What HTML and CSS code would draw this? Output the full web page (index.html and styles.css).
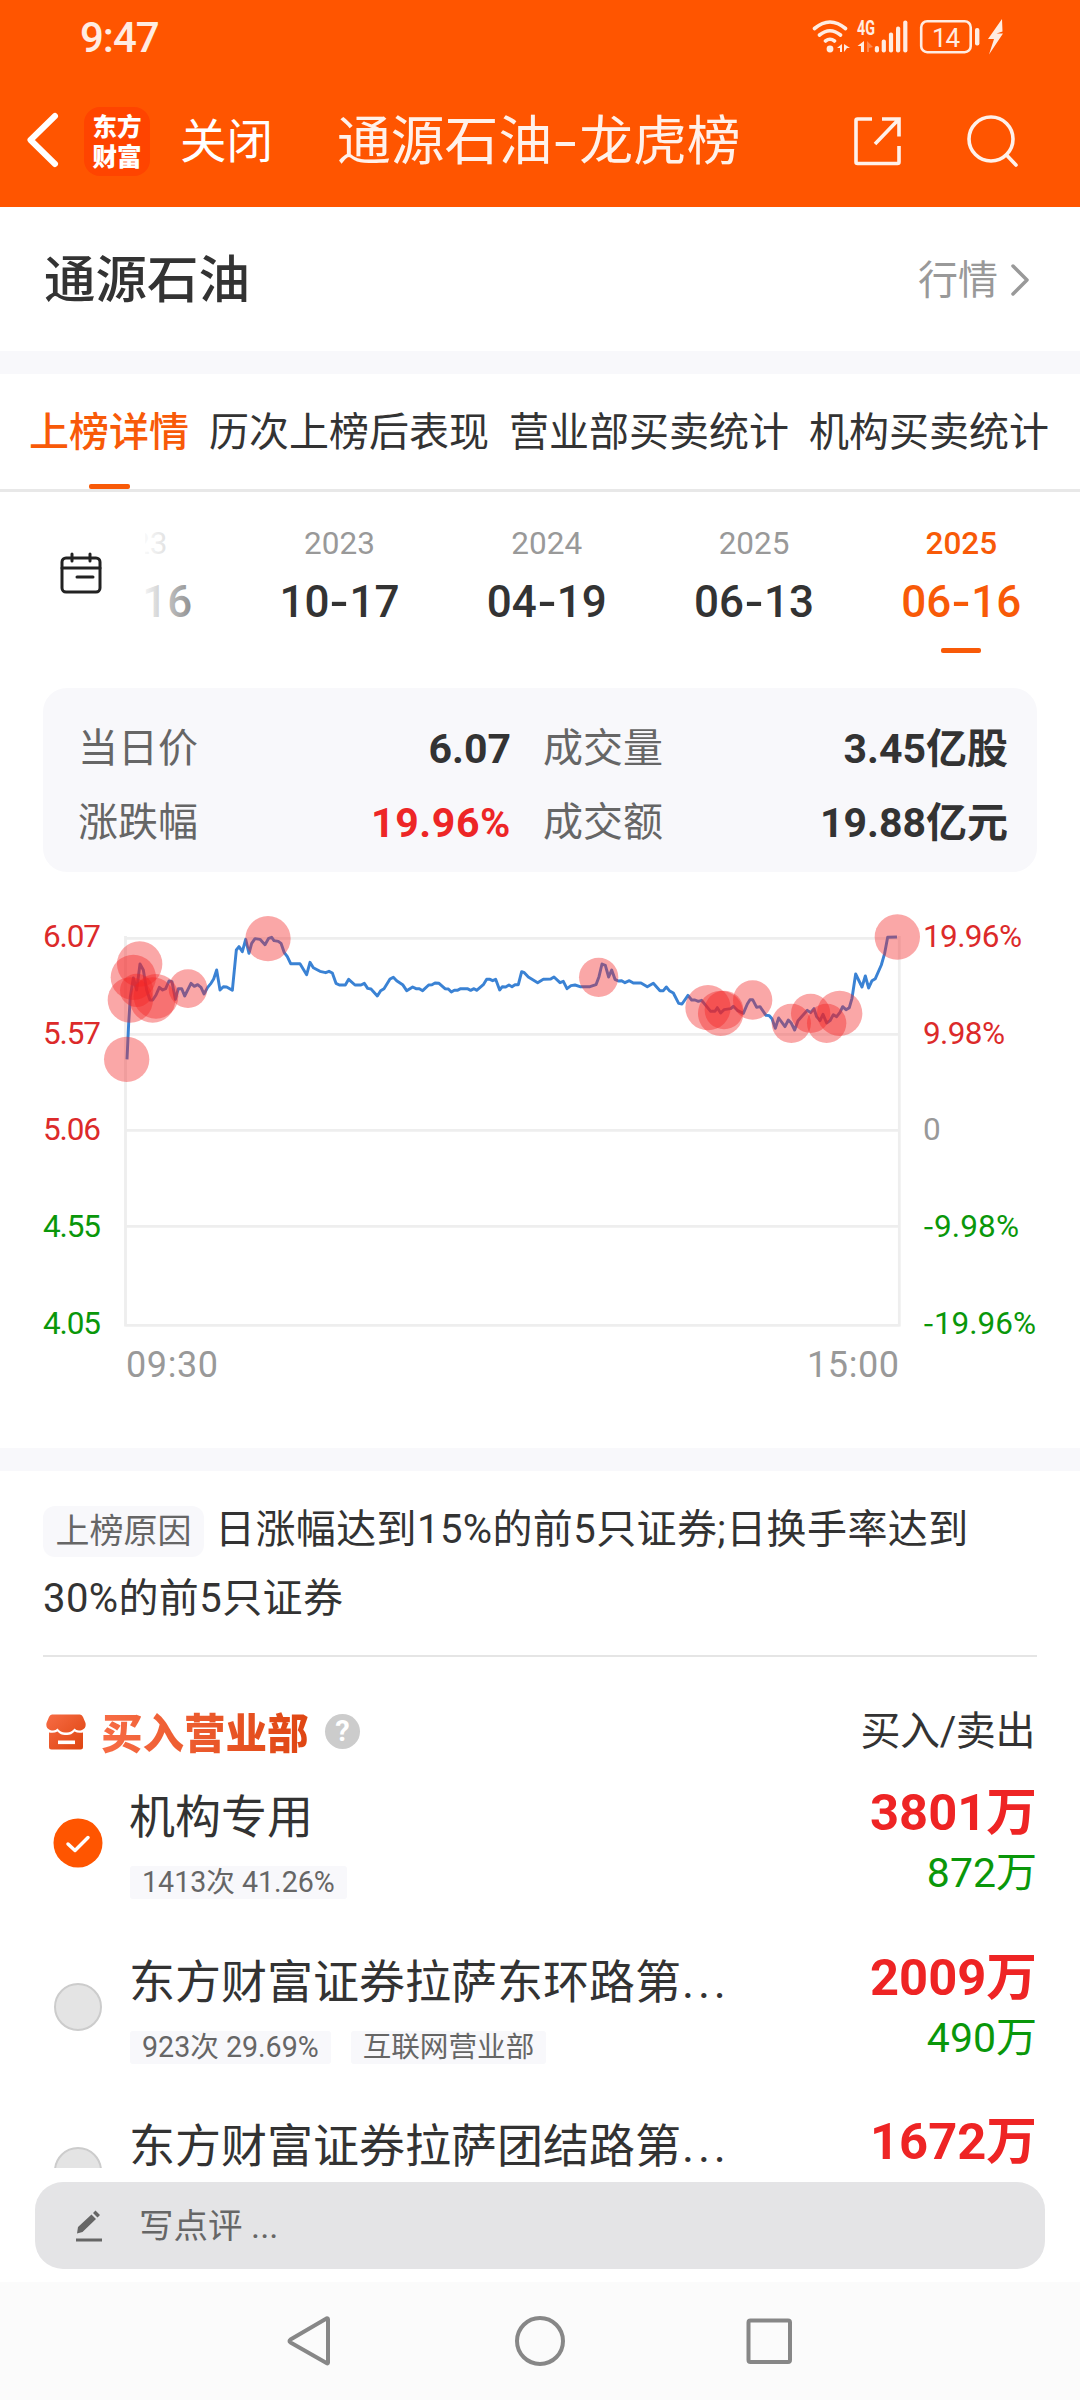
FILE: index.html
```html
<!DOCTYPE html>
<html lang="zh-CN">
<head>
<meta charset="utf-8">
<title>通源石油-龙虎榜</title>
<link rel="stylesheet" href="styles.css">
</head>
<body>
<header class="top">
  <div class="status">
    <span class="clock">9:47</span>
    <svg class="status-icons" width="200" height="44" viewBox="808 15 200 44" fill="none" stroke="#ffece2" stroke-linecap="round">
      <path stroke-width="3.6" d="M814.5 29.5Q830 16.500 845.500 29.500M819.500 36Q830 27.500 840.500 36M825.500 42Q830 38.500 834.500 42"/>
      <g fill="#ffece2" stroke="none">
        <circle cx="830" cy="50" r="3.4"/>
        <path d="M842 45v8h-2v-4h-3zM844 45l6 4h-3l-3 4zM864 42v11h-3v-6h-3.500z"/>
        <path opacity=".35" d="M867 42v11h2v-4l4-1z"/>
        <rect x="874.800" y="47" width="4.200" height="6.500" rx="2"/>
        <rect x="881.700" y="40.500" width="4.200" height="13" rx="2"/>
        <rect x="888.900" y="33.500" width="4.200" height="20" rx="2"/>
        <rect x="896" y="27.500" width="4.200" height="26" rx="2"/>
        <rect x="903.200" y="21.500" width="4.200" height="32" rx="2"/>
        <rect x="975" y="29" width="4.400" height="17.500" rx="2"/>
        <path d="M1002 20l-14 20h6l-5 15.500 14-21h-6.500l6-2z"/>
        <text class="net" x="857" y="36" textLength="18" lengthAdjust="spacingAndGlyphs">4G</text>
        <text class="bat" x="932" y="47.500" textLength="28">14</text>
      </g>
      <rect x="921.200" y="22.200" width="49.500" height="31" rx="6" stroke-width="2.600"/>
    </svg>
  </div>
  <nav class="bar">
    <svg class="back" width="34" height="60" viewBox="0 0 34 60" fill="none" stroke="#fff" stroke-width="6" stroke-linecap="round" stroke-linejoin="round"><path d="M29 6 4.500 30 29 54"/></svg>
    <span class="logo"><b>东方</b><b>财富</b></span>
    <span class="close">关闭</span>
    <h1 class="title">通源石油<span class="dash">-</span>龙虎榜</h1>
    <svg class="share" width="50" height="52" viewBox="0 0 50 52" fill="none" stroke="#fff1ea" stroke-width="3.600"><path d="M20 4H5.500Q4 4 4 5.500V47Q4 48.500 5.500 48.500H45.500Q47 48.500 47 47V31M30 4H47V21.500M47 4 23 29"/></svg>
    <svg class="search" width="54" height="56" viewBox="0 0 54 56" fill="none" stroke="#fff1ea" stroke-width="3.600" stroke-linecap="round"><circle cx="25" cy="25" r="22"/><path d="M40.500 41 50 51"/></svg>
  </nav>
</header>

<section class="stock">
  <h2>通源石油</h2>
  <a class="quote">行情<svg width="22" height="34" viewBox="0 0 22 34" fill="none" stroke="#999" stroke-width="3.500" stroke-linecap="round" stroke-linejoin="round"><path d="M4 3 18 17 4 31"/></svg></a>
</section>

<nav class="tabs">
  <span class="tab on">上榜详情</span><span class="tab">历次上榜后表现</span><span class="tab">营业部买卖统计</span><span class="tab">机构买卖统计</span>
</nav>

<section class="dates">
  <div class="cal">
    <svg width="42" height="44" viewBox="0 0 42 44" fill="none" stroke="#222" stroke-width="3" stroke-linecap="round"><rect x="2" y="6" width="38" height="34" rx="4"/><path d="M12 2v7M30 2v7M2 16H40M17 25H33"/></svg>
  </div>
  <div class="strip">
    <div class="track">
      <div class="day"><i>2023</i><b>03<span class="dash">-</span>16</b></div>
      <div class="day"><i>2023</i><b>10<span class="dash">-</span>17</b></div>
      <div class="day"><i>2024</i><b>04<span class="dash">-</span>19</b></div>
      <div class="day"><i>2025</i><b>06<span class="dash">-</span>13</b></div>
      <div class="day on"><i>2025</i><b>06<span class="dash">-</span>16</b></div>
    </div>
  </div>
</section>

<section class="card">
  <span>当日价</span><b>6.07</b><span>成交量</span><b>3.45亿股</b>
  <span>涨跌幅</span><b class="red">19.96%</b><span>成交额</span><b>19.88亿元</b>
</section>

<svg class="chart" width="1080" height="548" viewBox="0 900 1080 548">
  <path class="grid" d="M125.500 938.300H899.500M125.500 1034.300H899.500M125.500 1130.300H899.500M125.500 1226.300H899.500M125.500 1325.300H899.500M125.500 936V1326.500M899.300 936V1326.500"/>
  <g transform="translate(30 900) scale(.33333)">
    <polyline class="price" points="291,478 296,370 301,290 310,234 320,270 330,192 340,210 350,270 360,300 368,300 378,285 388,262 398,270 407,266 417,243 426,245 436,298 445,266 455,266 464,288 474,268 483,250 493,259 503,254 513,262 522,282 533,262 543,250 551,237 560,210 570,270 580,260 590,261 607,271 619,150 627,140 637,155 647,118 657,160 665,130 675,116 690,118 705,134 716,115 725,112 732,122 745,124 753,130 763,158 772,170 782,191 810,191 830,224 840,187 850,203 870,214 887,218 897,214 907,219 918,250 928,255 946,255 956,238 975,255 993,255 1003,250 1013,265 1023,267 1042,288 1052,272 1062,266 1080,237 1090,232 1100,242 1118,254 1130,272 1148,261 1158,266 1168,266 1178,272 1196,255 1206,254 1215,249 1227,250 1245,266 1255,267 1264,276 1273,271 1282,271 1292,266 1312,266 1322,271 1332,266 1340,271 1360,254 1370,238 1380,238 1388,242 1397,238 1409,270 1417,260 1427,261 1437,255 1446,260 1455,254 1465,254 1475,215 1483,218 1495,231 1523,248 1540,238 1562,237 1572,231 1590,248 1600,244 1611,266 1623,257 1635,255 1650,260 1680,260 1698,254 1707,230 1716,192 1726,196 1736,231 1745,210 1755,238 1765,243 1775,242 1785,248 1798,242 1810,249 1833,249 1852,260 1870,250 1890,272 1900,272 1909,261 1918,272 1930,279 1946,310 1956,312 1974,286 1985,300 1995,300 2005,304 2015,301 2042,334 2055,334 2062,323 2072,339 2082,329 2102,326 2110,319 2122,331 2140,340 2152,312 2160,299 2168,299 2180,322 2190,320 2208,346 2218,347 2226,356 2236,385 2246,354 2265,380 2275,360 2283,368 2294,390 2304,362 2332,331 2342,338 2352,326 2360,350 2370,362 2379,343 2390,369 2400,362 2410,344 2420,350 2430,337 2438,320 2448,329 2458,323 2466,295 2477,222 2496,261 2506,228 2516,264 2526,242 2536,236 2554,195 2564,160 2573,112 2601,111"/>
    <g class="dots">
      <circle cx="290" cy="478" r="68"/><circle cx="301" cy="300" r="68"/><circle cx="310" cy="232" r="68"/><circle cx="329" cy="192" r="68"/><circle cx="320" cy="271" r="50"/><circle cx="368" cy="300" r="68"/><circle cx="378" cy="289" r="67"/><circle cx="474" cy="266" r="58"/><circle cx="714" cy="116" r="68"/>
      <circle cx="1706" cy="232" r="59"/><circle cx="2034" cy="323" r="68"/><circle cx="2072" cy="340" r="68"/><circle cx="2082" cy="330" r="58"/><circle cx="2168" cy="300" r="59"/><circle cx="2284" cy="370" r="59"/><circle cx="2342" cy="340" r="59"/><circle cx="2390" cy="370" r="59"/><circle cx="2429" cy="340" r="68"/><circle cx="2602" cy="111" r="68"/>
    </g>
  </g>
  <g class="axis up"><text x="43" y="947" textLength="58">6.07</text><text x="43" y="1044" textLength="58">5.57</text><text x="43" y="1140" textLength="58">5.06</text><text x="923" y="947" textLength="99">19.96%</text><text x="923" y="1044" textLength="82">9.98%</text></g>
  <g class="axis down"><text x="43" y="1237" textLength="58">4.55</text><text x="43" y="1334" textLength="58">4.05</text><text x="923" y="1237" textLength="96"><tspan class="minus">-</tspan>9.98%</text><text x="923" y="1334" textLength="113"><tspan class="minus">-</tspan>19.96%</text></g>
  <g class="axis"><text x="923" y="1140">0</text></g>
  <g class="axis time"><text x="126" y="1377" textLength="92">09:30</text><text x="807" y="1377" textLength="92">15:00</text></g>
</svg>

<section class="reason">
  <p><span class="mark">上榜原因</span>日涨幅达到15%的前5只证券;日换手率达到30%的前5只证券</p>
</section>

<section class="buyers">
  <div class="head">
    <svg width="40" height="36" viewBox="0 0 40 36"><defs><linearGradient id="og" x1="0" y1="0" x2="1" y2="1"><stop offset="0" stop-color="#f76c45"/><stop offset="1" stop-color="#dd430e"/></linearGradient></defs><path fill="url(#og)" d="M6 .5H34Q36 .5 37 3L39.500 9Q40.500 14 36 16 31 17.500 28.500 14.500 25 19 20 18.500 15 19 11.500 14.500 9 17.500 4 16-.5 14 .5 9L3 3Q4 .5 6 .5ZM3 18.500Q8 19.500 11.500 17.500 15 21.500 20 21 25 21.500 28.500 17.500 32 19.500 37 18.500V33Q37 35.500 34.500 35.500H5.500Q3 35.500 3 33Z"/><rect x="12" y="26.500" width="17" height="3.600" fill="#fff"/></svg>
    <strong>买入营业部</strong>
    <span class="help">?</span>
    <span class="sides">买入/卖出</span>
  </div>
  <div class="row">
    <svg class="pick" width="50" height="50" viewBox="0 0 50 50"><circle cx="25" cy="25" r="24.500" fill="#f50"/><path d="M15 26 22 32.500 35 19.500" fill="none" stroke="#fff" stroke-width="3.500" stroke-linecap="round" stroke-linejoin="round"/></svg>
    <div class="who"><div class="name">机构专用</div><div class="chips"><span>1413次 41.26%</span></div></div>
    <div class="sum"><b>3801万</b><span>872万</span></div>
  </div>
  <div class="row">
    <i class="pick off"></i>
    <div class="who"><div class="name">东方财富证券拉萨东环路第<span class="dots3">...</span></div><div class="chips"><span>923次 29.69%</span><span>互联网营业部</span></div></div>
    <div class="sum"><b>2009万</b><span>490万</span></div>
  </div>
  <div class="row">
    <i class="pick off"></i>
    <div class="who"><div class="name">东方财富证券拉萨团结路第<span class="dots3">...</span></div></div>
    <div class="sum"><b>1672万</b></div>
  </div>
</section>

<div class="comment">
  <svg width="28" height="34" viewBox="0 0 28 34" fill="#666"><path d="M2 24.500 3 18 16.500 5.500 21 10 7.500 23ZM18 4 20.500 1.500 25 6 22.500 8.500Z"/><rect x="1" y="29.500" width="26" height="3"/></svg>
  <span>写点评 ...</span>
</div>

<footer class="sys">
  <svg width="1080" height="118" viewBox="0 2282 1080 118" fill="none" stroke="#878787" stroke-width="4" stroke-linejoin="round"><path d="M328 2319.500V2362.500Q328 2364 326.500 2363L290.500 2342.500Q288.500 2341 290.500 2339.500L326.500 2318.500Q328 2318 328 2319.500Z"/><circle cx="540" cy="2341" r="23"/><rect x="748.500" y="2320.500" width="41.500" height="41.500" rx="2"/></svg>
</footer>
</body>
</html>
```
FILE: styles.css
```css
* { box-sizing: border-box; margin: 0; padding: 0; }
body {
  width: 1080px; height: 2400px; overflow: hidden;
  display: flex; flex-direction: column;
  background: #fff; color: #333;
  font-family: Roboto, "Noto Sans CJK SC", sans-serif;
  font-size: 40px; line-height: 60px; white-space: nowrap;
}
body > * { flex: none; }
i { font-style: normal; }
svg { display: block; flex: none; }
.dash { display: inline-block; transform: scaleX(1.5); }

.top { height: 207px; background: #f50; color: #fff1ea; }
.status { height: 73px; padding: 14px 72px 0 80px; display: flex; justify-content: space-between; }
.clock { font-size: 42px; line-height: 48px; font-weight: 500; letter-spacing: -1px; color: #ffece2; }
.net { font-size: 20px; font-weight: 700; }
.bat { font-size: 26px; }
.bar { height: 131px; display: flex; align-items: center; padding: 0 60px 8px 26px; }
.back { margin-top: 11px; }
.logo {
  width: 67px; height: 69px; margin: 13px 0 0 24px; padding-top: 4px; border-radius: 16px;
  background: #f40; color: #fff; display: flex; flex-direction: column; align-items: center;
}
.logo b { font: 900 24.500px/30px "Noto Sans CJK SC", sans-serif; }
.close { font-size: 46.500px; margin: 15px 0 0 30px; color: #fff; }
.title { font-size: 53.800px; font-weight: 400; margin: 15px 0 0 64px; width: 403px; }
.title .dash { width: 27px; text-align: center; }
.share { margin: 13px 0 0 112px; }
.search { margin: 14px 0 0 64px; }

.stock { height: 167px; border-bottom: 23px solid #f8f8fb; padding: 3px 49px 0 44px; display: flex; align-items: center; justify-content: space-between; }
.stock h2 { font-size: 51.500px; font-weight: 500; }
.quote { color: #999; display: flex; align-items: center; gap: 11px; }
.quote svg { margin-top: -2px; }

.tabs { height: 118px; border-bottom: 3px solid #e8e8e8; padding: 0 29px; display: flex; gap: 20px; }
.tab { position: relative; line-height: 117px; }
.tab.on { color: #f85a08; font-weight: 500; }
.tab.on::after { content: ""; position: absolute; left: 60px; bottom: 0; width: 41px; height: 5px; border-radius: 2px; background: #f85a08; }

.dates { height: 196px; display: flex; }
.cal { width: 145px; padding: 60px 0 0 60px; }
.strip { width: 935px; overflow: hidden; position: relative; display: flex; justify-content: flex-end; }
.strip::before { content: ""; position: absolute; z-index: 1; left: 0; top: 0; width: 90px; height: 196px; background: linear-gradient(90deg, #fffffff0, #fff0); }
.track { display: flex; padding-right: 15px; }
.day { width: 207.300px; padding-top: 34px; display: flex; flex-direction: column; align-items: center; position: relative; }
.day i { font-size: 31.500px; line-height: 36px; color: #999; }
.day b { font-size: 44px; line-height: 60px; margin-top: 10px; font-weight: 500; }
.day .dash { width: 20px; text-align: center; transform: scaleX(1.25); }
.day.on, .day.on i { color: #f85a08; }
.day.on i { font-weight: 500; }
.day.on::after { content: ""; position: absolute; top: 156px; width: 40px; height: 5px; border-radius: 2px; background: #f85a08; }

.card {
  margin: 0 43px; height: 184px; padding: 24px 29px 0 35px; border-radius: 24px; background: #f8f8fb;
  display: grid; grid-template-columns: 120px 313px 120px 1fr; grid-auto-rows: 74px; align-content: start; line-height: 74px;
}
.card span { color: #666; }
.card b { text-align: right; font-size: 41px; }
.card span:nth-of-type(even) { margin-left: 32px; }
.card .red { color: #ed2626; letter-spacing: .6px; }

.chart { margin-top: 28px; }
.grid { fill: none; stroke: #eee; stroke-width: 2.800; }
.price { fill: none; stroke: #3a82d4; stroke-width: 8.800; stroke-linejoin: round; }
.dots { fill: #f32424; fill-opacity: .4; }
.axis { font-size: 31.500px; fill: #999; }
.axis.up { fill: #dc2a2a; }
.axis.down { fill: #0a970a; }
.axis.time { font-size: 36px; }
.minus { font-family: "Noto Sans CJK SC", sans-serif; }

.reason { margin: 0 43px; border-bottom: 2px solid #e5e5e5; height: 209px; }
.reason::before { content: ""; display: block; height: 23px; margin: 0 -43px; background: #f8f8fb; }
.reason p { padding-top: 24px; line-height: 69px; white-space: normal; letter-spacing: .4px; }
.mark { display: inline-block; width: 161px; height: 51px; margin-right: 11px; border-radius: 12px; background: #f8f8fb; color: #666; font-size: 34px; line-height: 51px; text-align: center; letter-spacing: 0; }

.buyers { height: 511px; overflow: hidden; padding: 0 43px; }
.head { display: flex; align-items: center; height: 114px; padding: 36px 2px 0 3px; }
.head strong { font: 900 41.500px/48px "Noto Sans CJK SC", sans-serif; margin: -3px 0 0 15px; width: 224px; background: linear-gradient(90deg, #f76c45, #dd430e); -webkit-background-clip: text; background-clip: text; color: transparent; }
.help { width: 35px; height: 35px; border-radius: 50%; background: #ccc; color: #fff; font-size: 29px; font-weight: 700; line-height: 35px; text-align: center; margin-top: -1px; }
.sides { margin-left: auto; letter-spacing: -.4px; }
.row { height: 164.500px; display: flex; padding-left: 10px; }
.pick { margin: 47px 26px 0 0; width: 50px; height: 50px; }
.pick.off { margin: 47px 27px 0 1px; width: 48px; height: 48px; border-radius: 50%; background: #e4e4e4; border: 2.500px solid #ccc; }
.name { font-size: 46px; line-height: 60px; margin-top: 16px; }
.dots3 { letter-spacing: 3.800px; margin-left: 1px; }
.chips { display: flex; gap: 20px; margin-top: 19px; margin-left: 1px; }
.chips span { height: 33px; line-height: 33px; padding: 0 12px; border-radius: 3px; background: #f8f8fb; color: #666; font-size: 28.600px; }
.sum { margin-left: auto; display: flex; flex-direction: column; align-items: flex-end; }
.sum b { font-size: 50.700px; line-height: 60px; color: #ee2424; margin-top: 12px; }
.sum span { color: #0a970a; font-size: 41px; line-height: 60px; }

.comment { margin: 14px 35px 0; height: 87px; border-radius: 28px; background: #e4e4e6; color: #666; display: flex; align-items: center; padding-left: 40px; gap: 36px; font-size: 34.500px; }
.sys { margin-top: 13px; height: 118px; background: #fbfbfb; }
```
